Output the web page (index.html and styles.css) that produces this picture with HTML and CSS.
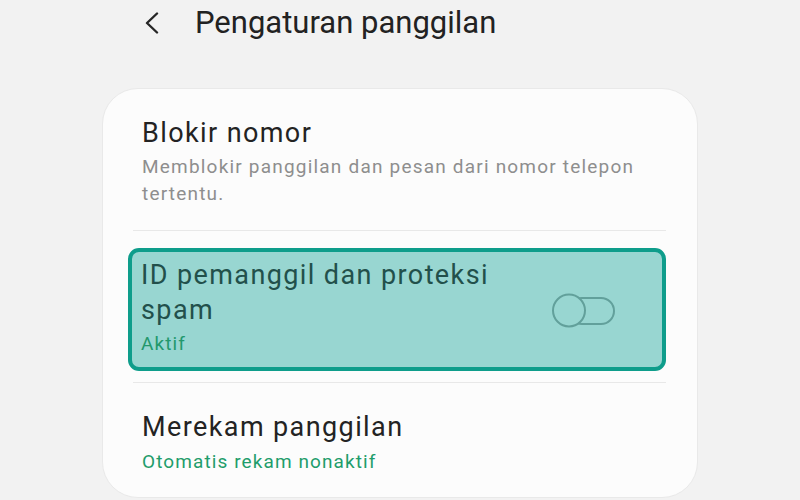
FILE: index.html
```html
<!DOCTYPE html>
<html lang="id">
<head>
  <meta charset="UTF-8">
  <title>Pengaturan panggilan</title>
  <link rel="stylesheet" href="styles.css">
</head>
<body>
<div id="header">
  <a href="#" class="back">
    <svg width="16" height="22" viewBox="0 0 16 22">
      <path d="M13 1.5 L3 11 L13 20.5" fill="none" stroke="#262626" stroke-width="2.4" stroke-linecap="round" stroke-linejoin="round"/>
    </svg>
  </a>
  <h1>Pengaturan panggilan</h1>
</div>

<div id="card">
  <div class="row first">
    <div class="title">Blokir nomor</div>
    <div class="sub">Memblokir panggilan dan pesan dari nomor telepon tertentu.</div>
  </div>
  <div class="divider"></div>

  <div class="row highlight">
    <div class="text">
      <div class="title">ID pemanggil dan proteksi spam</div>
      <div class="status">Aktif</div>
    </div>
    <svg class="switch" width="64" height="36" viewBox="0 0 64 36">
      <rect x="17" y="5" width="45" height="26" rx="13" fill="none" stroke="#62a09b" stroke-width="2"/>
      <circle cx="17" cy="17.5" r="16" fill="#98d6d1" stroke="#62a09b" stroke-width="2"/>
    </svg>
  </div>
  <div class="divider"></div>

  <div class="row last">
    <div class="title">Merekam panggilan</div>
    <div class="status">Otomatis rekam nonaktif</div>
  </div>
</div>
</body>
</html>
```

FILE: styles.css
```css
* {
  margin: 0;
  padding: 0;
}

body {
  background: #f2f2f2;
  font-family: Roboto, "Noto Sans", sans-serif;
  width: 800px;
  height: 500px;
  overflow: hidden;
}

#header {
  display: flex;
  align-items: center;
  height: 40px;
  padding: 3px 0 0 144px;
}

.back {
  display: block;
  width: 16px;
  height: 22px;
  margin-right: 35px;
}

#header h1 {
  font-size: 31px;
  font-weight: 400;
  line-height: 40px;
  color: #222;
}

#card {
  margin: 45px 0 0 102px;
  width: 596px;
  height: 410px;
  background: #fcfcfc;
  border: 1px solid #e9e9e9;
  border-radius: 36px;
  box-sizing: border-box;
  padding-top: 27px;
}

.row {
  padding: 0 39px;
}

.title {
  font-size: 27px;
  line-height: 34px;
  letter-spacing: 1.4px;
  color: #232323;
}

.sub {
  margin-top: 3px;
  font-size: 19px;
  line-height: 27px;
  letter-spacing: 1.2px;
  color: #8e8e8e;
  width: 510px;
}

.first {
  padding-bottom: 23px;
}

.divider {
  height: 1px;
  background: #e8e8e8;
  margin: 0 31px 0 30px;
}

.highlight {
  display: flex;
  align-items: flex-start;
  justify-content: space-between;
  margin: 17px 31px 11px 25px;
  padding: 6px 46px 12px 9px;
  background: #98d6d1;
  border: 4px solid #0e9d8b;
  border-radius: 11px;
}

.highlight .text {
  width: 390px;
}

.highlight .title {
  line-height: 35px;
  color: #22504b;
}

.highlight .status {
  margin-top: 5px;
  line-height: 22px;
  color: #23986c;
}

.switch {
  display: block;
  margin-top: 35px;
}

.status {
  font-size: 19px;
  line-height: 27px;
  letter-spacing: 1.1px;
  color: #1f9d6b;
}

.last {
  padding-top: 27px;
}

.last .status {
  margin-top: 4px;
}
```
